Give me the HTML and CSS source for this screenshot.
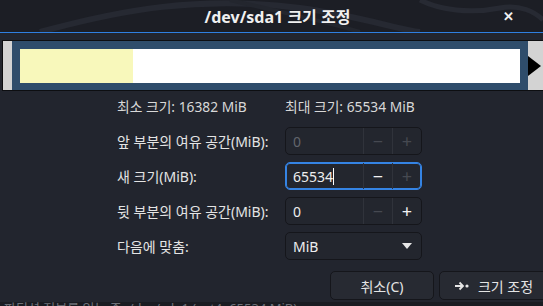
FILE: index.html
```html
<!DOCTYPE html>
<html lang="ko">
<head>
<meta charset="utf-8">
<link rel="stylesheet" href="styles.css">
</head>
<body>
<div class="dialog">
  <header class="titlebar">
    <svg class="watermark" width="543" height="32" viewBox="0 0 543 32">
      <path d="M40 32 C120 10 200 -5 300 8 C360 16 400 30 420 32" fill="none" stroke="#262932" stroke-width="6"/>
      <path d="M230 0 C280 12 320 20 360 32" fill="none" stroke="#23262e" stroke-width="4"/>
      <path d="M420 0 C440 10 470 14 500 8 C520 4 535 12 543 20" fill="none" stroke="#272a33" stroke-width="5"/>
    </svg>
    <span class="title">/dev/sda1 크기 조정</span>
    <span class="close">✕</span>
  </header>

  <div class="bar">
    <div class="bar-edge"></div>
    <div class="bar-frame">
      <div class="bar-inner"><div class="used"></div></div>
    </div>
    <div class="bar-edge right"><svg width="14" height="20" viewBox="0 0 14 20"><polygon points="0,0 13,10 0,20" fill="#000"/></svg></div>
  </div>

  <div class="form">
    <div class="info">최소 크기: 16382 MiB</div>
    <div class="info">최대 크기: 65534 MiB</div>

    <div class="label">앞 부분의 여유 공간(MiB):</div>
    <div class="spin">
      <span class="entry dim">0</span>
      <span class="step dim">−</span>
      <span class="step dim">+</span>
    </div>

    <div class="label">새 크기(MiB):</div>
    <div class="spin focus">
      <span class="entry">65534<i class="caret"></i></span>
      <span class="step">−</span>
      <span class="step dim">+</span>
    </div>

    <div class="label">뒷 부분의 여유 공간(MiB):</div>
    <div class="spin">
      <span class="entry">0</span>
      <span class="step dim">−</span>
      <span class="step">+</span>
    </div>

    <div class="label">다음에 맞춤:</div>
    <div class="combo">
      <span>MiB</span>
      <svg width="10" height="6" viewBox="0 0 10 6"><polygon points="0,0 10,0 5,6" fill="#e6e6e6"/></svg>
    </div>
  </div>

  <div class="actions">
    <button class="btn cancel">취소(C)</button>
    <button class="btn resize">
      <svg width="16" height="10" viewBox="0 0 16 10"><path d="M1 5 H9 M5.5 1.5 L9 5 L5.5 8.5" fill="none" stroke="#e6e6e6" stroke-width="1.8"/><circle cx="13" cy="5" r="1.6" fill="#e6e6e6"/></svg>
      <span>크기 조정</span>
    </button>
  </div>
</div>
<div class="behind">파티션 정보를 읽는 중: /dev/sda1 (ext4, 65534 MiB)</div>
</body>
</html>
```

FILE: styles.css
```css
html, body {
  margin: 0;
  padding: 0;
}
body {
  width: 543px;
  height: 306px;
  overflow: hidden;
  background: #1a1c22;
  font-family: "Noto Sans", "Noto Sans CJK KR", sans-serif;
  font-size: 14px;
  color: #e4e4e4;
  position: relative;
}
.dialog {
  height: 302px;
  background: #22252e;
  display: flex;
  flex-direction: column;
}
.titlebar {
  height: 32px;
  background: #1c1e25;
  border-bottom: 1px solid #2f7fe0;
  position: relative;
  display: flex;
  align-items: center;
  justify-content: center;
  flex: none;
}
.watermark {
  position: absolute;
  left: 0;
  top: 0;
}
.title {
  position: relative;
  font-weight: bold;
  font-size: 16px;
  color: #f0f0f0;
  margin-left: 12px;
}
.close {
  position: absolute;
  right: 29px;
  top: 7px;
  font-size: 13px;
  font-weight: bold;
  color: #f0f0f0;
}
.bar {
  margin: 7px -20px 0 2px;
  height: 49px;
  border: 1px solid #0d0e11;
  display: flex;
  flex: none;
}
.bar-edge {
  width: 9px;
  background: #d3d3d3;
  flex: none;
}
.bar-edge.right {
  width: 36px;
  display: flex;
  align-items: center;
  padding-top: 1px;
}
.bar-frame {
  width: 500px;
  background: #2f4d6b;
  padding: 8px 8px 7px 8px;
  flex: none;
}
.bar-inner {
  height: 34px;
  background: #ffffff;
}
.used {
  width: 113px;
  height: 100%;
  background: #f8f8bb;
}
.form {
  display: grid;
  grid-template-columns: 168px 137px;
  grid-auto-rows: 28px;
  row-gap: 7px;
  margin: 1px 0 0 117px;
  align-items: center;
}
.info {
  color: #d8d8d8;
  font-size: 13.8px;
}
.label {
  color: #e4e4e4;
  white-space: nowrap;
}
.spin, .combo {
  height: 28px;
  box-sizing: border-box;
  border: 1px solid #15161b;
  border-radius: 5px;
  background: #23262e;
  display: flex;
  align-items: stretch;
}
.spin.focus {
  border-color: #3584e4;
  box-shadow: inset 0 0 0 1px #3584e4;
}
.entry {
  flex: 1;
  display: flex;
  align-items: center;
  padding-left: 7px;
  color: #eeeeee;
}
.entry.dim {
  color: #62656c;
}
.caret {
  display: inline-block;
  width: 1px;
  height: 17px;
  background: #ffffff;
}
.step {
  width: 28px;
  border-left: 1px solid #30333b;
  display: flex;
  align-items: center;
  justify-content: center;
  font-size: 18px;
  color: #f2f2f2;
}
.step.dim {
  color: #464951;
}
.combo {
  justify-content: space-between;
  align-items: center;
  padding: 0 9px 0 7px;
  color: #eeeeee;
}
.actions {
  display: flex;
  justify-content: flex-end;
  gap: 5px;
  margin: 11px -5px 0 0;
}
.btn {
  height: 29px;
  width: 104px;
  box-sizing: border-box;
  border: 1px solid #15161b;
  border-radius: 5px;
  background: #272a32;
  color: #e4e4e4;
  font-family: inherit;
  font-size: 14px;
  display: flex;
  align-items: center;
  justify-content: center;
  gap: 8px;
  padding: 0;
}
.btn.resize {
  width: 109px;
}
.behind {
  position: absolute;
  left: 4px;
  top: 298px;
  color: #6d7078;
  font-size: 13px;
  white-space: nowrap;
  z-index: -1;
}
```
